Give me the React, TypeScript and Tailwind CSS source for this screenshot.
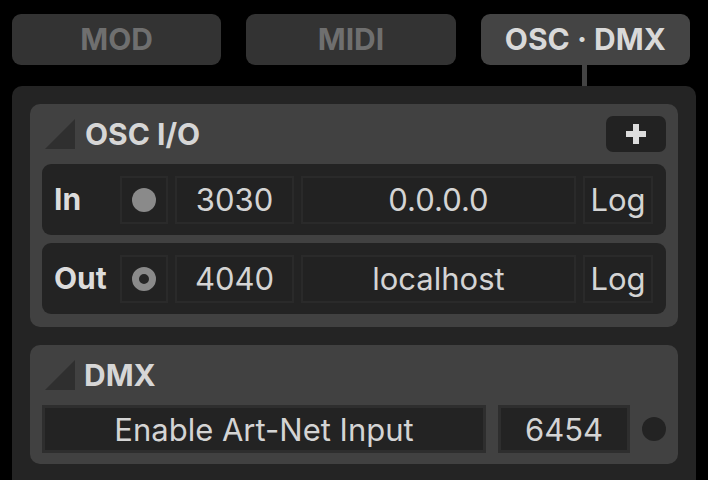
import React from "react";

const font = { fontFamily: "Inter, 'Noto Sans', 'Liberation Sans', sans-serif" };

function Corner() {
  return (
    <svg width="30" height="30" viewBox="0 0 30 30" className="shrink-0">
      <polygon points="30,0 30,30 0,30" fill="#2f2f2f" />
    </svg>
  );
}

function Cell({ w, children }: { w: string; children?: React.ReactNode }) {
  return (
    <div
      className={`${w} h-[48px] shrink-0 flex items-center justify-center border-2 border-[#2a2a2a] bg-[#222222] text-[31px] text-[#d4d4d4] leading-none`}
    >
      {children}
    </div>
  );
}

function OscRow({ label, port, host, active }: { label: string; port: string; host: string; active: boolean }) {
  return (
    <div className="h-[71px] rounded-[9px] bg-[#232323] flex items-center pl-[12px] pr-[13px] gap-[7px]">
      <div className="w-[59px] shrink-0 text-[30px] font-bold text-[#dcdcdc]">{label}</div>
      <Cell w="w-[48px]">
        {active ? (
          <div className="w-[24px] h-[24px] rounded-full bg-[#8a8a8a]" />
        ) : (
          <div className="w-[24px] h-[24px] rounded-full border-[7px] border-[#8a8a8a] bg-[#262626]" />
        )}
      </Cell>
      <Cell w="w-[119px]">{port}</Cell>
      <Cell w="w-[275px]">{host}</Cell>
      <Cell w="w-[70px]">Log</Cell>
    </div>
  );
}

export default function App() {
  const tabs = [
    { name: "MOD", active: false },
    { name: "MIDI", active: false },
    { name: "OSC · DMX", active: true },
  ];

  return (
    <div className="w-[708px] h-[480px] bg-black overflow-hidden pt-[14px] pl-[12px]" style={font}>
      {/* Tabs */}
      <div className="flex gap-[25px] w-[678px]">
        {tabs.map((t) => (
          <div
            key={t.name}
            className={`h-[51px] flex-1 rounded-[9px] flex items-center justify-center text-[30px] font-bold ${
              t.active ? "bg-[#444444] text-[#d9d9d9]" : "bg-[#333333] text-[#6f6f6f]"
            }`}
          >
            {t.name}
          </div>
        ))}
      </div>
      <div className="ml-[570px] w-[5px] h-[21px] bg-[#444444]" />

      {/* Main panel */}
      <div className="w-[684px] h-[420px] rounded-[10px] bg-[#242424] pt-[18px] px-[18px] flex flex-col gap-[18px]">
        {/* OSC I/O */}
        <div className="rounded-[10px] bg-[#414141] pt-[12px] px-[12px] pb-[13px]">
          <div className="h-[36px] flex items-center">
            <div className="ml-[3px] flex items-center gap-[10px]">
              <Corner />
              <span className="text-[30px] font-bold text-[#d6d6d6]">OSC I/O</span>
            </div>
            <div className="ml-auto w-[60px] h-[36px] rounded-[7px] bg-[#222222] flex items-center justify-center">
              <svg width="22" height="22" viewBox="0 0 22 22">
                <rect x="8" y="1" width="6" height="20" fill="#dcdcdc" />
                <rect x="1" y="8" width="20" height="6" fill="#dcdcdc" />
              </svg>
            </div>
          </div>
          <div className="mt-[12px] flex flex-col gap-[8px]">
            <OscRow label="In" port="3030" host="0.0.0.0" active />
            <OscRow label="Out" port="4040" host="localhost" active={false} />
          </div>
        </div>

        {/* DMX */}
        <div className="rounded-[10px] bg-[#414141] pt-[12px] px-[12px] pb-[11px]">
          <div className="h-[36px] flex items-center">
            <div className="ml-[3px] flex items-center gap-[9px]">
              <Corner />
              <span className="text-[30px] font-bold text-[#d6d6d6]">DMX</span>
            </div>
          </div>
          <div className="mt-[12px] flex items-center gap-[12px]">
            <div className="w-[444px] h-[48px] border-[3px] border-[#2e2e2e] bg-[#232323] flex items-center justify-center text-[31px] text-[#d4d4d4] leading-none">
              Enable Art-Net Input
            </div>
            <div className="w-[132px] h-[48px] border-[3px] border-[#2e2e2e] bg-[#232323] flex items-center justify-center text-[31px] text-[#d4d4d4] leading-none">
              6454
            </div>
            <div className="w-[24px] h-[24px] rounded-full bg-[#232323]" />
          </div>
        </div>
      </div>
    </div>
  );
}
